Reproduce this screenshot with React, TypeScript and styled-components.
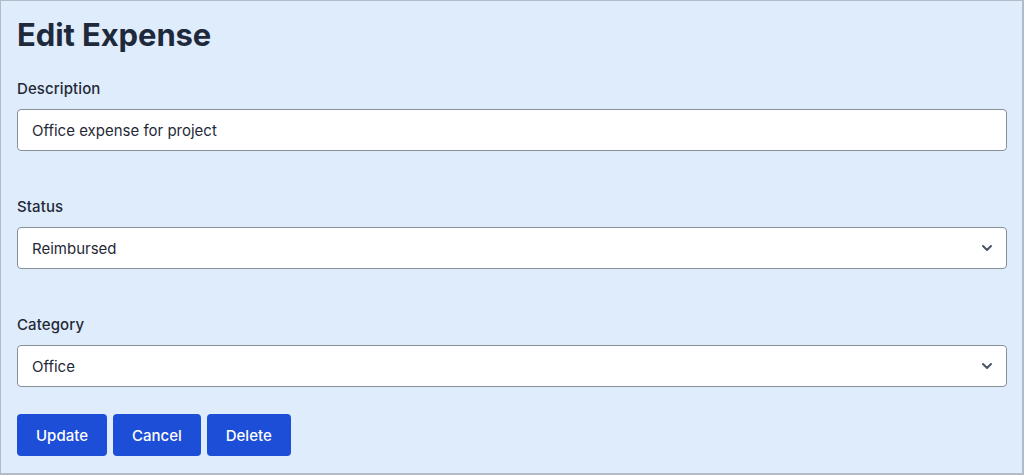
import React from "react";
import styled, { createGlobalStyle } from "styled-components";

const Global = createGlobalStyle`
  html, body { margin: 0; padding: 0; }
  body { font-family: Inter, "Noto Sans", sans-serif; }
  * { box-sizing: border-box; }
`;

const Page = styled.div`
  width: 1024px;
  height: 475px;
  background: #dfecfb;
  border: 1px solid #b3bcc6;
  border-right-width: 2px;
  border-bottom-width: 2px;
  padding: 15px 16px 0 16px;
  color: #1f2937;
`;

const Title = styled.h1`
  margin: 0 0 25px 0;
  font-size: 31px;
  line-height: 38px;
  font-weight: 700;
  color: #1e293b;
  letter-spacing: -0.1px;
`;

const Field = styled.div<{ $last?: boolean }>`
  display: flex;
  flex-direction: column;
  gap: 10px;
  margin-bottom: ${(p) => (p.$last ? "27px" : "46px")};
`;

const Label = styled.label`
  font-size: 15px;
  line-height: 20px;
  font-weight: 500;
  color: #1f2937;
  letter-spacing: 0.1px;
`;

const Box = styled.div`
  position: relative;
  height: 42px;
  width: 990px;
  background: #ffffff;
  border: 1px solid #8a9099;
  border-radius: 4px;
  display: flex;
  align-items: center;
  padding: 0 14px;
  font-size: 15px;
  color: #1f2937;
`;

const Chevron = styled.svg`
  position: absolute;
  right: 13px;
  top: 50%;
  margin-top: -5px;
`;

const Actions = styled.div`
  display: flex;
  gap: 6px;
`;

const Button = styled.button`
  height: 42px;
  padding: 0 19px;
  background: #1d4ed8;
  color: #ffffff;
  border: none;
  border-radius: 4px;
  font-family: Inter, "Noto Sans", sans-serif;
  font-size: 15px;
  font-weight: 500;
`;

const Select = ({ value }: { value: string }) => (
  <Box>
    {value}
    <Chevron width="12" height="10" viewBox="0 0 12 10">
      <path d="M2 3 L6 7 L10 3" fill="none" stroke="#4b5563" strokeWidth="2" strokeLinecap="round" strokeLinejoin="round" />
    </Chevron>
  </Box>
);

export default function App() {
  return (
    <>
      <Global />
      <Page>
        <Title>Edit Expense</Title>
        <Field>
          <Label>Description</Label>
          <Box>Office expense for project</Box>
        </Field>
        <Field>
          <Label>Status</Label>
          <Select value="Reimbursed" />
        </Field>
        <Field $last>
          <Label>Category</Label>
          <Select value="Office" />
        </Field>
        <Actions>
          <Button>Update</Button>
          <Button>Cancel</Button>
          <Button>Delete</Button>
        </Actions>
      </Page>
    </>
  );
}
